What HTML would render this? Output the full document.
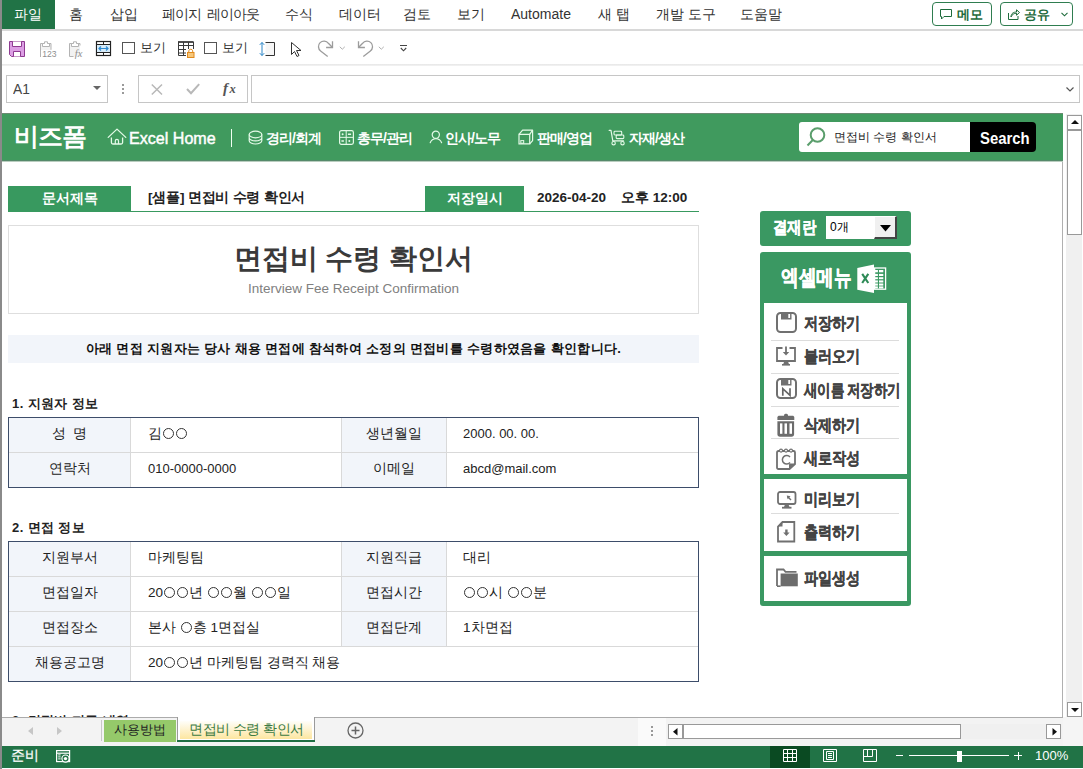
<!DOCTYPE html>
<html><head><meta charset="utf-8">
<style>
*{box-sizing:border-box;margin:0;padding:0}
html,body{width:1083px;height:769px;overflow:hidden;background:#fff;font-family:"Liberation Sans",sans-serif;color:#262626;position:relative}
.a{position:absolute;white-space:nowrap}
svg{position:absolute;overflow:visible}
#tabs{position:absolute;left:0;top:0;width:1083px;height:31px;background:#fff;border-bottom:2px solid #d8d8d8}
.tab{position:absolute;top:6px;font-size:14px;color:#333;white-space:nowrap;line-height:17px}
#filetab{position:absolute;left:1px;top:0;width:54px;height:29px;background:#217346;color:#fff;font-size:14px;line-height:29px;text-align:center}
.btn{position:absolute;top:2px;height:24px;border:1px solid #2f7d50;border-radius:4px}
.btxt{position:absolute;top:6px;font-size:13px;font-weight:bold;color:#1e6b3c;line-height:17px}
#leftedge{position:absolute;left:0;top:0;width:2px;height:769px;background:#8a8a8a;z-index:5}
#qat{position:absolute;left:0;top:31px;width:1083px;height:34px;background:#fff}
#qatline{position:absolute;left:0;top:64px;width:1083px;height:2px;background:linear-gradient(#e6e6e6,#f3f3f3)}
.box{position:absolute;border:1px solid #c6c6c6;background:#fff}
#banner{position:absolute;left:2px;top:113px;width:1061px;height:48px;background:#409a5e;border-top:1px solid #6a8a72;border-bottom:1px solid #55896a;box-shadow:0 1px 0 #b9cdbf}
.nav{position:absolute;top:12px;line-height:24px;color:#fff;font-size:14px;font-weight:bold;white-space:nowrap;letter-spacing:-1px}
.lbl{position:absolute;background:#38995f;color:#fff;font-weight:bold;font-size:13.5px;text-align:center;line-height:26px}
.line{position:absolute;background:#d9d9d9}
.dk{position:absolute;background:#3d4d6a}
.cell{position:absolute;font-size:13.5px;color:#222;white-space:nowrap;line-height:16px}
.lc{position:absolute;font-size:13.5px;color:#222;white-space:nowrap;line-height:16px;text-align:center}
.sec{position:absolute;font-size:13px;font-weight:bold;color:#222;white-space:nowrap;line-height:16px;letter-spacing:0.4px}
.mi{position:absolute;left:804px;font-size:17px;font-weight:bold;color:#444;-webkit-text-stroke:0.35px #444;white-space:nowrap;line-height:20px;transform:scaleX(0.83);transform-origin:0 0}
.o{display:inline-block;width:11px;height:11px;border:1px solid #333;border-radius:50%;margin:0 1px;vertical-align:-1px}
.msep{position:absolute;left:771px;width:128px;height:1px;background:#dcdcdc}
</style></head><body>
<div id="tabs">
  <div id="filetab">파일</div>
  <div class="tab" style="left:69px">홈</div>
  <div class="tab" style="left:110px">삽입</div>
  <div class="tab" style="left:162px;letter-spacing:-0.8px;word-spacing:2px">페이지 레이아웃</div>
  <div class="tab" style="left:285px">수식</div>
  <div class="tab" style="left:339px">데이터</div>
  <div class="tab" style="left:403px">검토</div>
  <div class="tab" style="left:457px">보기</div>
  <div class="tab" style="left:511px">Automate</div>
  <div class="tab" style="left:598px">새 탭</div>
  <div class="tab" style="left:656px">개발 도구</div>
  <div class="tab" style="left:740px">도움말</div>
  <div class="btn" style="left:932px;width:60px"></div>
  <svg style="left:940px;top:9px" width="12" height="11" viewBox="0 0 12 11"><path d="M0.5 0.5H11.5V7.5H4L1.5 10V7.5H0.5Z" fill="none" stroke="#1e6b3c" stroke-width="1"/></svg>
  <div class="btxt" style="left:957px">메모</div>
  <div class="btn" style="left:1000px;width:73px"></div>
  <svg style="left:1008px;top:9px" width="12" height="11" viewBox="0 0 12 11"><path d="M0.5 4V10.5H10V7" fill="none" stroke="#1e6b3c"/><path d="M3 8C3 4 6 3 8.5 3V0.8L11.5 3.5L8.5 6.2V4.2C6 4.2 4 5.5 3 8Z" fill="none" stroke="#1e6b3c"/></svg>
  <div class="btxt" style="left:1024px">공유</div>
  <svg style="left:1061px;top:12px" width="7" height="5" viewBox="0 0 7 5"><path d="M0.5 0.8L3.5 3.8L6.5 0.8" fill="none" stroke="#1e6b3c" stroke-width="1.1"/></svg>
</div>
<div id="qat">
  <!-- save -->
  <svg style="left:9px;top:10px" width="16" height="16" viewBox="0 0 16 16"><path d="M0.5 0.5H15.5V15.5H2.5L0.5 13.5Z" fill="#dc9ee4" stroke="#8e3b91"/><path d="M3.5 0.5V5.5H12.5V0.5" fill="#fff" stroke="#8e3b91"/><path d="M4.5 15.5V10.5H11.5V15.5" fill="#fff" stroke="#8e3b91"/></svg>
  <!-- paste values -->
  <svg style="left:40px;top:10px" width="15" height="17" viewBox="0 0 15 17"><rect x="1" y="2.6" width="10" height="6.5" fill="#f2f2f2"/><path d="M0.5 16V2.5H11V8.8" fill="none" stroke="#b3b3b3"/><path d="M2.5 5.5V2.5H4.5V0.8H7.5V2.5H9.5V5.5Z" fill="#fff" stroke="#b3b3b3"/><text x="2.2" y="15.9" font-size="8.6" fill="#8f8f8f" font-family="Liberation Sans">123</text></svg>
  <!-- paste formula -->
  <svg style="left:69px;top:10px" width="15" height="17" viewBox="0 0 15 17"><rect x="1" y="2.6" width="10" height="13" fill="#f2f2f2"/><path d="M0.5 15.5V2.5H11V4.5M0.5 15.5H4.5" fill="none" stroke="#b3b3b3"/><path d="M2.5 5.5V2.5H4.5V0.8H7.5V2.5H9.5V5.5Z" fill="#fff" stroke="#b3b3b3"/><text x="5.8" y="15.6" font-size="10.5" font-style="italic" fill="#8f8f8f" font-family="Liberation Serif">fx</text></svg>
  <!-- width -->
  <svg style="left:96px;top:10px" width="15" height="15" viewBox="0 0 15 15"><rect x="0.5" y="0.5" width="14" height="14" fill="#fff" stroke="#222" stroke-width="1.2"/><rect x="1" y="4" width="13" height="7" fill="#d6ebf9"/><path d="M0 3.5H15M0 11.5H15M7.5 0V3.5M7.5 11.5V15" stroke="#222" stroke-width="1"/><path d="M3 7.5H12M5 5.5L3 7.5L5 9.5M10 5.5L12 7.5L10 9.5" fill="none" stroke="#2f8ad0" stroke-width="1.2"/></svg>
  <div class="a" style="left:122px;top:11px;width:13px;height:12px;border:1px solid #555;background:#fff"></div>
  <div class="a" style="left:140px;top:9px;font-size:12.5px;color:#333;line-height:16px">보기</div>
  <!-- table lock -->
  <svg style="left:178px;top:10px" width="17" height="17" viewBox="0 0 17 17"><path d="M0.5 1V14.5H8M0 1H15.5V8M0.5 4.5H15.5M0.5 8.5H8M0.5 12H8M5.5 1V14.5M10.5 1V8" fill="none" stroke="#3a3a3a" stroke-width="1"/><path d="M0 1H15.5" stroke="#3a3a3a" stroke-width="1.6"/><rect x="9.5" y="11.5" width="6.5" height="5" fill="#f7c77a" stroke="#e08a1e"/><path d="M10.8 11.5V9.8A2 2 0 0 1 14.7 9.8V11.5" fill="none" stroke="#e08a1e"/></svg>
  <div class="a" style="left:204px;top:11px;width:13px;height:12px;border:1px solid #555;background:#fff"></div>
  <div class="a" style="left:222px;top:9px;font-size:12.5px;color:#333;line-height:16px">보기</div>
  <!-- row height -->
  <svg style="left:259px;top:10px" width="17" height="16" viewBox="0 0 17 16"><path d="M6.5 1.5H15.5V14.5H6.5" fill="#f6f6f6" stroke="#333"/><path d="M3 1.5V14.5M0.8 3.8L3 1.5L5.2 3.8M0.8 12.2L3 14.5L5.2 12.2" fill="none" stroke="#2a86c8" stroke-width="1"/></svg>
  <!-- cursor -->
  <svg style="left:291px;top:11px" width="11" height="15" viewBox="0 0 11 15"><path d="M0.5 0.5V12.5L3.5 9.5L6 14.5L8 13.5L5.5 8.5H10Z" fill="#fff" stroke="#333"/></svg>
  <!-- redo -->
  <svg style="left:318px;top:9px" width="17" height="18" viewBox="0 0 17 18"><path d="M14.5 7.5L10.4 3.3A5.5 5.5 0 1 0 2.6 10.9L9.7 16.5" fill="none" stroke="#9c9c9c" stroke-width="1.3"/><path d="M8.1 7.5H14.5V1.2" fill="none" stroke="#9c9c9c" stroke-width="1.3"/></svg>
  <svg style="left:339px;top:15px" width="7" height="4" viewBox="0 0 7 4"><path d="M0.8 0.8L3.3 3.2L5.8 0.8" fill="none" stroke="#b0b0b0" stroke-width="1"/></svg>
  <!-- undo -->
  <svg style="left:357px;top:9px" width="17" height="18" viewBox="0 0 17 18"><path d="M1.5 7.5L5.6 3.3A5.5 5.5 0 1 1 13.4 10.9L6.3 16.5" fill="none" stroke="#9c9c9c" stroke-width="1.3"/><path d="M7.9 7.5H1.5V1.2" fill="none" stroke="#9c9c9c" stroke-width="1.3"/></svg>
  <svg style="left:378px;top:15px" width="7" height="4" viewBox="0 0 7 4"><path d="M0.8 0.8L3.3 3.2L5.8 0.8" fill="none" stroke="#b0b0b0" stroke-width="1"/></svg>
  <!-- customize -->
  <svg style="left:400px;top:14px" width="7" height="7" viewBox="0 0 7 7"><path d="M0 0.5H7M0.8 3L3.5 5.8L6.2 3" fill="none" stroke="#444" stroke-width="1.1"/></svg>
</div>
<div id="qatline"></div>
<!-- formula bar -->
<div class="box" style="left:6px;top:75px;width:102px;height:28px"></div>
<div class="a" style="left:13px;top:80px;font-size:15px;color:#444;line-height:18px;transform:scaleX(0.92);transform-origin:0 0">A1</div>
<svg style="left:93px;top:86px" width="8" height="4" viewBox="0 0 8 4"><path d="M0 0H8L4 4Z" fill="#666"/></svg>
<div class="a" style="left:122px;top:84px;width:2px;height:2px;background:#9a9a9a"></div><div class="a" style="left:122px;top:88px;width:2px;height:2px;background:#9a9a9a"></div><div class="a" style="left:122px;top:92px;width:2px;height:2px;background:#9a9a9a"></div>
<div class="box" style="left:138px;top:75px;width:110px;height:28px"></div>
<svg style="left:151px;top:84px" width="12" height="11" viewBox="0 0 12 11"><path d="M0.8 0.5L11 10.5M11 0.5L0.8 10.5" stroke="#b8b8b8" stroke-width="1.5"/></svg>
<svg style="left:186px;top:83px" width="14" height="12" viewBox="0 0 14 12"><path d="M1 6L5 10.2L13.2 1.2" fill="none" stroke="#b8b8b8" stroke-width="2"/></svg>
<div class="a" style="left:223px;top:80px;font-size:15px;font-style:italic;font-weight:bold;color:#555;font-family:'Liberation Serif',serif;line-height:17px">f<span style="font-size:12.5px;margin-left:1.5px">x</span></div>
<div class="box" style="left:251px;top:75px;width:829px;height:28px"></div>
<svg style="left:1066px;top:87px" width="8" height="5" viewBox="0 0 8 5"><path d="M0.5 0.5L4 4L7.5 0.5" fill="none" stroke="#555" stroke-width="1.2"/></svg>
<div id="leftedge"></div>
<!-- sheet right edge -->
<div class="a" style="left:1062px;top:113px;width:1px;height:605px;background:#b0b0b0"></div>
<div class="a" style="left:1063px;top:113px;width:20px;height:604px;background:#fff"></div>
<!-- banner -->
<div id="banner">
  <div class="nav" style="left:12px;top:8px;font-size:25px;line-height:28px;letter-spacing:-1px">비즈폼</div>
  <svg style="left:105px;top:14px" width="20" height="17" viewBox="0 0 20 17"><path d="M1.2 9.4L10 1.1L18.8 9.4" fill="none" stroke="#e4fae8" stroke-width="1.3" stroke-linecap="round" stroke-linejoin="round"/><path d="M4.4 9.6V14.5Q4.4 16 5.9 16H14.1Q15.6 16 15.6 14.5V9.6" fill="none" stroke="#e4fae8" stroke-width="1.3"/><path d="M8.3 16V13A1.6 1.6 0 0 1 11.5 13V16" fill="none" stroke="#e4fae8" stroke-width="1.2"/></svg>
  <div class="nav" style="left:127px;top:12px;font-size:16.5px;font-weight:normal;letter-spacing:0;-webkit-text-stroke:0.45px #fff;transform:scaleX(0.975);transform-origin:0 0">Excel Home</div>
  <div class="a" style="left:229px;top:15px;width:1.3px;height:18px;background:#f0fff2"></div>
  <svg style="left:246px;top:16px" width="15" height="15" viewBox="0 0 15 15"><ellipse cx="7.5" cy="4.5" rx="6.3" ry="3.3" fill="none" stroke="#e4fae8" stroke-width="1.2"/><path d="M1.2 7.7A6.3 3.2 0 0 0 13.8 7.7M1.2 4.5V10.8A6.3 3.2 0 0 0 13.8 10.8V4.5" fill="none" stroke="#e4fae8" stroke-width="1.2"/></svg>
  <div class="nav" style="left:264px">경리/회계</div>
  <svg style="left:337px;top:16px" width="15" height="15" viewBox="0 0 15 15"><rect x="0.6" y="0.6" width="13.8" height="13.8" rx="1.8" fill="none" stroke="#e4fae8" stroke-width="1.2"/><path d="M7.2 0.6V14.4M0.6 7.35H14.4" stroke="#e4fae8" stroke-width="1"/><circle cx="3.6" cy="4.2" r="1" fill="#e4fae8"/><path d="M8.9 4.2H12.1M2.4 11H4.9" stroke="#e4fae8" stroke-width="1.5"/><circle cx="10.3" cy="11" r="1" fill="#e4fae8"/></svg>
  <div class="nav" style="left:355px">총무/관리</div>
  <svg style="left:427px;top:16px" width="14" height="14" viewBox="0 0 14 14"><circle cx="6.8" cy="4.8" r="3.6" fill="none" stroke="#e4fae8" stroke-width="1.2"/><path d="M1.2 12.7A6.1 6.1 0 0 1 12.6 12.7" fill="none" stroke="#e4fae8" stroke-width="1.2" stroke-linecap="round"/></svg>
  <div class="nav" style="left:443px">인사/노무</div>
  <svg style="left:516px;top:15px" width="16" height="16" viewBox="0 0 16 16"><path d="M1 5.4H11.7V14.85H1Z" fill="none" stroke="#e4fae8" stroke-width="1.2"/><path d="M1 5.4L4.6 1.2H14.6L11.7 5.4M14.6 1.2V11.6L11.7 14.85" fill="none" stroke="#e4fae8" stroke-width="1.2" stroke-linejoin="round"/><rect x="2.8" y="11.6" width="2.9" height="2.6" fill="none" stroke="#e4fae8" stroke-width="1"/></svg>
  <div class="nav" style="left:535px">판매/영업</div>
  <svg style="left:606px;top:15px" width="17" height="17" viewBox="0 0 17 17"><path d="M1.2 1.4H3L4.8 11.9H15.5" fill="none" stroke="#e4fae8" stroke-width="1.2" stroke-linejoin="round" stroke-linecap="round"/><circle cx="5.6" cy="14.2" r="1.7" fill="none" stroke="#e4fae8" stroke-width="1.1"/><circle cx="14.5" cy="14.2" r="1.7" fill="none" stroke="#e4fae8" stroke-width="1.1"/><rect x="6" y="2.3" width="7.7" height="3.7" rx="0.9" fill="none" stroke="#e4fae8" stroke-width="1.1"/><rect x="8.2" y="6" width="7.6" height="3.6" rx="0.9" fill="none" stroke="#e4fae8" stroke-width="1.1"/></svg>
  <div class="nav" style="left:627px">자재/생산</div>
  <div class="a" style="left:797px;top:8px;width:172px;height:30px;background:#fff;border-radius:3px 0 0 3px"></div>
  <svg style="left:804px;top:13px" width="20" height="20" viewBox="0 0 20 20"><circle cx="11.5" cy="8" r="6.8" fill="none" stroke="#5a9e6c" stroke-width="2"/><path d="M6.8 13L1.5 18.5" stroke="#5a9e6c" stroke-width="2"/></svg>
  <div class="a" style="left:832px;top:15px;font-size:12.2px;color:#222;line-height:16px">면접비 수령 확인서</div>
  <div class="a" style="left:968px;top:8px;width:66px;height:30px;background:#000;border-radius:0 4px 4px 0"></div>
  <div class="a" style="left:978px;top:16px;font-size:16px;font-weight:bold;color:#fff;line-height:18px;transform:scaleX(0.93);transform-origin:0 0">Search</div>
</div>
<!-- doc header -->
<div class="lbl" style="left:8px;top:186px;width:123px;height:26px">문서제목</div>
<div class="a" style="left:131px;top:211px;width:294px;height:1px;background:#38995f"></div>
<div class="cell" style="left:148px;top:190px;font-weight:bold;font-size:13.5px;letter-spacing:-0.2px">[샘플] 면접비 수령 확인서</div>
<div class="lbl" style="left:425px;top:186px;width:99px;height:26px">저장일시</div>
<div class="a" style="left:524px;top:211px;width:175px;height:1px;background:#38995f"></div>
<div class="cell" style="left:537px;top:190px;font-weight:bold;font-size:13.5px">2026-04-20 &nbsp;&nbsp;&nbsp;오후 12:00</div>
<div class="a" style="left:8px;top:225px;width:691px;height:89px;border:1px solid #dedede"></div>
<div class="a" style="left:8px;top:242px;width:691px;text-align:center;font-size:28px;font-weight:bold;color:#3a3a3a;line-height:34px">면접비 수령 확인서</div>
<div class="a" style="left:8px;top:281px;width:691px;text-align:center;font-size:13.5px;color:#808080;line-height:16px">Interview Fee Receipt Confirmation</div>
<div class="a" style="left:8px;top:335px;width:691px;height:28px;background:#f2f5fa;text-align:center;font-size:13px;font-weight:bold;line-height:28px;color:#111;letter-spacing:0.3px">아래 면접 지원자는 당사 채용 면접에 참석하여 소정의 면접비를 수령하였음을 확인합니다.</div>
<div class="sec" style="left:12px;top:396px">1. 지원자 정보</div>
<!-- table1 -->
<div class="a" style="left:9px;top:418px;width:121px;height:69px;background:#f2f5fa"></div>
<div class="a" style="left:342px;top:418px;width:104px;height:69px;background:#f2f5fa"></div>
<div class="line" style="left:9px;top:452px;width:689px;height:1px"></div>
<div class="line" style="left:130px;top:418px;width:1px;height:69px"></div>
<div class="line" style="left:341px;top:418px;width:1px;height:69px"></div>
<div class="line" style="left:446px;top:418px;width:1px;height:69px"></div>
<div class="a" style="left:8px;top:417px;width:691px;height:71px;border:1px solid #3d4d6a"></div>
<div class="lc" style="left:9px;width:121px;top:426px">성&nbsp;&nbsp;명</div>
<div class="cell" style="left:148px;top:426px">김<span class="o"></span><span class="o"></span></div>
<div class="lc" style="left:342px;width:104px;top:426px">생년월일</div>
<div class="cell" style="left:463px;top:426px;font-size:13px">2000. 00. 00.</div>
<div class="lc" style="left:9px;width:121px;top:461px">연락처</div>
<div class="cell" style="left:148px;top:461px;font-size:13px">010-0000-0000</div>
<div class="lc" style="left:342px;width:104px;top:461px">이메일</div>
<div class="cell" style="left:463px;top:461px;font-size:13px">abcd@mail.com</div>
<div class="sec" style="left:12px;top:520px">2. 면접 정보</div>
<!-- table2 -->
<div class="a" style="left:9px;top:542px;width:121px;height:139px;background:#f2f5fa"></div>
<div class="a" style="left:342px;top:542px;width:104px;height:104px;background:#f2f5fa"></div>
<div class="line" style="left:9px;top:576px;width:689px;height:1px"></div>
<div class="line" style="left:9px;top:611px;width:689px;height:1px"></div>
<div class="line" style="left:9px;top:646px;width:689px;height:1px"></div>
<div class="line" style="left:130px;top:542px;width:1px;height:139px"></div>
<div class="line" style="left:341px;top:542px;width:1px;height:104px"></div>
<div class="line" style="left:446px;top:542px;width:1px;height:104px"></div>
<div class="a" style="left:8px;top:541px;width:691px;height:141px;border:1px solid #3d4d6a"></div>
<div class="lc" style="left:9px;width:121px;top:550px">지원부서</div>
<div class="cell" style="left:148px;top:550px">마케팅팀</div>
<div class="lc" style="left:342px;width:104px;top:550px">지원직급</div>
<div class="cell" style="left:463px;top:550px">대리</div>
<div class="lc" style="left:9px;width:121px;top:585px">면접일자</div>
<div class="cell" style="left:148px;top:585px">20<span class="o"></span><span class="o"></span>년 <span class="o"></span><span class="o"></span>월 <span class="o"></span><span class="o"></span>일</div>
<div class="lc" style="left:342px;width:104px;top:585px">면접시간</div>
<div class="cell" style="left:463px;top:585px"><span class="o"></span><span class="o"></span>시 <span class="o"></span><span class="o"></span>분</div>
<div class="lc" style="left:9px;width:121px;top:620px">면접장소</div>
<div class="cell" style="left:148px;top:620px">본사 <span class="o"></span>층 1면접실</div>
<div class="lc" style="left:342px;width:104px;top:620px">면접단계</div>
<div class="cell" style="left:463px;top:620px">1차면접</div>
<div class="lc" style="left:9px;width:121px;top:655px">채용공고명</div>
<div class="cell" style="left:148px;top:655px">20<span class="o"></span><span class="o"></span>년 마케팅팀 경력직 채용</div>
<div class="sec" style="left:12px;top:713px">3. 면접비 지급 내역</div>
<!-- right panel -->
<div class="a" style="left:760px;top:211px;width:151px;height:35px;background:#3a9862;border-radius:3px"></div>
<div class="a" style="left:773px;top:217px;font-size:17px;font-weight:bold;color:#fff;-webkit-text-stroke:0.4px #fff;line-height:22px;transform:scaleX(0.85);transform-origin:0 0">결재란</div>
<div class="a" style="left:826px;top:216px;width:48px;height:23px;background:#fff"></div>
<div class="a" style="left:830px;top:220px;font-size:12px;color:#000;line-height:15px">0개</div>
<div class="a" style="left:874px;top:216px;width:23px;height:23px;background:#f0f0f0;border-right:2px solid #444;border-bottom:2px solid #444;border-top:1px solid #fff;border-left:1px solid #fff"></div>
<svg style="left:880px;top:225px" width="11" height="7" viewBox="0 0 11 7"><path d="M0 0H11L5.5 6.5Z" fill="#000"/></svg>
<div class="a" style="left:760px;top:252px;width:151px;height:354px;background:#3a9862;border-radius:3px"></div>
<div class="a" style="left:781px;top:265px;font-size:22px;font-weight:bold;color:#fff;-webkit-text-stroke:0.5px #fff;line-height:26px;transform:scaleX(0.8);transform-origin:0 0">엑셀메뉴</div>
<svg style="left:857px;top:264px" width="30" height="29" viewBox="0 0 30 29"><rect x="17.6" y="4" width="11" height="21.2" fill="none" stroke="#fff" stroke-width="1.3"/><rect x="17.3" y="6.0" width="3.6" height="2.3" fill="#fff"/><rect x="22.0" y="6.0" width="4.3" height="2.3" fill="#fff"/><rect x="17.3" y="9.9" width="3.6" height="2.1" fill="#fff"/><rect x="22.0" y="9.9" width="4.3" height="2.1" fill="#fff"/><rect x="17.3" y="13.2" width="3.6" height="2.0" fill="#fff"/><rect x="22.0" y="13.2" width="4.3" height="2.0" fill="#fff"/><rect x="17.3" y="16.4" width="3.6" height="2.1" fill="#fff"/><rect x="22.0" y="16.4" width="4.3" height="2.1" fill="#fff"/><rect x="17.3" y="19.5" width="3.6" height="2.1" fill="#fff"/><rect x="22.0" y="19.5" width="4.3" height="2.1" fill="#fff"/><rect x="17.3" y="22.4" width="3.6" height="2.0" fill="#fff"/><rect x="22.0" y="22.4" width="4.3" height="2.0" fill="#fff"/><path d="M0.3 3.9L17 0.5V28.9L0.3 25.7Z" fill="#fff"/><path d="M5.2 9.8L11.3 19M11.3 9.8L5.2 19" stroke="#2e8b57" stroke-width="2.1"/></svg>
<div class="a" style="left:764px;top:303px;width:143px;height:171px;background:#fff"></div>
<div class="a" style="left:764px;top:479px;width:143px;height:72px;background:#fff"></div>
<div class="a" style="left:764px;top:556px;width:143px;height:45px;background:#fff"></div>
<div class="msep" style="top:340px"></div>
<div class="msep" style="top:373px"></div>
<div class="msep" style="top:406px"></div>
<div class="msep" style="top:438px"></div>
<div class="msep" style="top:513px"></div>
<div class="mi" style="top:314px">저장하기</div>
<div class="mi" style="top:347px">불러오기</div>
<div class="mi" style="top:381px;word-spacing:-1.5px;transform:scaleX(0.79)">새이름 저장하기</div>
<div class="mi" style="top:416px">삭제하기</div>
<div class="mi" style="top:449px">새로작성</div>
<div class="mi" style="top:490px">미리보기</div>
<div class="mi" style="top:523px">출력하기</div>
<div class="mi" style="top:569px">파일생성</div>
<!-- menu icons -->
<svg style="left:776px;top:312px" width="21" height="21" viewBox="0 0 21 21"><rect x="1" y="1" width="19" height="19" rx="3.5" fill="none" stroke="#707070" stroke-width="2"/><rect x="5" y="1" width="10.5" height="6.5" fill="#707070"/><rect x="12.3" y="2" width="1.8" height="4" fill="#fff"/></svg>
<svg style="left:776px;top:346px" width="20" height="20" viewBox="0 0 20 20"><path d="M6.5 2H1V15H19V2H13.5" fill="none" stroke="#707070" stroke-width="1.8"/><path d="M10 0.5V8" stroke="#707070" stroke-width="1.8"/><path d="M6.8 6L10 9.6L13.2 6Z" fill="#707070"/><path d="M8.2 15.5L7.2 18.2H13L12 15.5Z" fill="#707070"/><rect x="6" y="18" width="8" height="1.6" fill="#707070"/></svg>
<svg style="left:776px;top:378px" width="21" height="21" viewBox="0 0 21 21"><rect x="1" y="1" width="19" height="19" rx="3.5" fill="none" stroke="#707070" stroke-width="2"/><rect x="5" y="1" width="10.5" height="6.5" fill="#707070"/><rect x="12.3" y="2" width="1.8" height="4" fill="#fff"/><path d="M6.8 17.8V10.6L14 17.4V10.2" fill="none" stroke="#666" stroke-width="1.7" stroke-linejoin="miter"/></svg>
<svg style="left:777px;top:413px" width="18" height="24" viewBox="0 0 18 24"><path d="M0.4 7V4.5C0.4 3.3 1.3 2.8 2.5 2.8H15.3C16.5 2.8 17.3 3.3 17.3 4.5V7Z" fill="#6c6c6c"/><rect x="7" y="0.8" width="4" height="3" rx="1.5" fill="#6c6c6c"/><path d="M0.4 8.3H17.1V21C17.1 22.8 16.2 23.8 14.5 23.8H3C1.3 23.8 0.4 22.8 0.4 21Z" fill="#6c6c6c"/><rect x="3" y="10.4" width="2.4" height="10.4" fill="#fff"/><rect x="7.5" y="10.4" width="2.5" height="10.4" fill="#fff"/><rect x="12.5" y="10.4" width="2.5" height="10.4" fill="#fff"/></svg>
<svg style="left:776px;top:448px" width="20" height="22" viewBox="0 0 20 22"><path d="M1 4.5C1 3.5 1.5 3 2.5 3H17.5C18.5 3 19 3.5 19 4.5V16L13.5 21H2.5C1.5 21 1 20.5 1 19.5Z" fill="none" stroke="#707070" stroke-width="1.8"/><path d="M13 21.3V17C13 16 13.5 15.5 14.5 15.5H19.2Z" fill="#707070"/><circle cx="5" cy="2.6" r="1.5" fill="#fff" stroke="#707070" stroke-width="1.1"/><circle cx="10" cy="2.6" r="1.5" fill="#fff" stroke="#707070" stroke-width="1.1"/><circle cx="15" cy="2.6" r="1.5" fill="#fff" stroke="#707070" stroke-width="1.1"/><path d="M14 9A4.3 4.3 0 1 0 14 14.5" fill="none" stroke="#707070" stroke-width="1.5"/></svg>
<svg style="left:777px;top:491px" width="20" height="18" viewBox="0 0 20 18"><rect x="1" y="1" width="17.5" height="12" rx="2" fill="none" stroke="#707070" stroke-width="1.8"/><path d="M10.5 5.5L14 9" stroke="#707070" stroke-width="1.4"/><path d="M9.8 4.5L13.5 5.2L10.6 8.2Z" fill="#707070"/><path d="M8 13.5L7 16H12.5L11.5 13.5Z" fill="#707070"/><rect x="5" y="15.8" width="9.5" height="1.8" fill="#707070"/></svg>
<svg style="left:777px;top:521px" width="19" height="22" viewBox="0 0 19 22"><path d="M5.5 1H17.3V20.5H1V5.5Z" fill="none" stroke="#707070" stroke-width="1.8"/><path d="M1 5.5H5.5V1Z" fill="#707070"/><rect x="8.2" y="8.5" width="2.4" height="3.5" fill="#707070"/><path d="M6.2 11.5H12.6L9.4 15Z" fill="#707070"/></svg>
<svg style="left:776px;top:568px" width="22" height="19" viewBox="0 0 22 19"><path d="M1 18V1.5H7.5L9.5 3.8H20.5" fill="none" stroke="#707070" stroke-width="1.8"/><path d="M4.6 5.5H21.8V18.3H4.6Z" fill="#6c6c6c"/><path d="M1 18.2H4.6" stroke="#707070" stroke-width="1.6"/></svg>
<!-- vscroll -->
<div class="a" style="left:1066px;top:114px;width:16px;height:603px;background:#f0f0f0"></div>
<div class="a" style="left:1067px;top:115px;width:15px;height:15px;background:#fff;border:1px solid #999"></div>
<svg style="left:1071px;top:120px" width="8" height="4" viewBox="0 0 8 4"><path d="M0 4L4 0L8 4Z" fill="#111"/></svg>
<div class="a" style="left:1067px;top:130px;width:15px;height:105px;background:#fff;border:1px solid #999"></div>
<div class="a" style="left:1067px;top:702px;width:15px;height:15px;background:#fff;border:1px solid #999"></div>
<svg style="left:1071px;top:708px" width="8" height="4" viewBox="0 0 8 4"><path d="M0 0L4 4L8 0Z" fill="#111"/></svg>
<!-- tab bar -->
<div class="a" style="left:0;top:717px;width:1063px;height:29px;background:#f3f3f3;border-top:1px solid #ababab"></div><div class="a" style="left:1063px;top:717px;width:20px;height:29px;background:#f5f5f5"></div>
<svg style="left:28px;top:727px" width="5" height="8" viewBox="0 0 5 8"><path d="M5 0V8L0 4Z" fill="#c6c6c6"/></svg>
<svg style="left:57px;top:727px" width="5" height="8" viewBox="0 0 5 8"><path d="M0 0V8L5 4Z" fill="#c6c6c6"/></svg>
<div class="a" style="left:101px;top:720px;width:1px;height:21px;background:#c8c8c8"></div>
<div class="a" style="left:104px;top:720px;width:72px;height:22px;background:#95c96a"></div>
<div class="a" style="left:114px;top:721px;font-size:13px;color:#222;line-height:17px">사용방법</div>
<div class="a" style="left:177px;top:717px;width:138px;height:25px;background:#fff;border-left:1px solid #9a9a9a;border-right:1px solid #9a9a9a"></div>
<div class="a" style="left:180px;top:721px;width:132px;height:18px;background:linear-gradient(#fffefa,#fde6a0)"></div>
<div class="a" style="left:177px;top:740px;width:138px;height:2px;background:#1f6e43"></div>
<div class="a" style="left:189px;top:721px;font-size:13.5px;color:#3c7a42;line-height:17px;letter-spacing:-0.5px">면접비 수령 확인서</div>
<svg style="left:347px;top:722px" width="17" height="17" viewBox="0 0 17 17"><circle cx="8.5" cy="8.5" r="7.5" fill="none" stroke="#666" stroke-width="1.3"/><path d="M8.5 4.5V12.5M4.5 8.5H12.5" stroke="#666" stroke-width="1.5"/></svg>
<div class="a" style="left:638px;top:718px;width:28px;height:28px;background:#fafafa"></div><div class="a" style="left:651px;top:726px;width:2px;height:2px;background:#999"></div><div class="a" style="left:651px;top:730px;width:2px;height:2px;background:#999"></div><div class="a" style="left:651px;top:734px;width:2px;height:2px;background:#999"></div>
<div class="a" style="left:667px;top:724px;width:395px;height:15px;background:#f0f0f0"></div>
<div class="a" style="left:668px;top:724px;width:15px;height:15px;background:#fff;border:1px solid #999"></div>
<svg style="left:673px;top:728px" width="5" height="8" viewBox="0 0 5 8"><path d="M4.5 0V7.5L0 3.75Z" fill="#111"/></svg>
<div class="a" style="left:683px;top:724px;width:278px;height:15px;background:#fff;border:1px solid #999"></div>
<div class="a" style="left:1046px;top:724px;width:15px;height:15px;background:#fff;border:1px solid #999"></div>
<svg style="left:1052px;top:728px" width="5" height="8" viewBox="0 0 5 8"><path d="M0.5 0V7.5L5 3.75Z" fill="#111"/></svg>
<!-- status bar -->
<div class="a" style="left:0;top:746px;width:1083px;height:22px;background:#217346"></div>
<div class="a" style="left:11px;top:748px;font-size:13.5px;color:#fff;-webkit-text-stroke:0.25px #fff;line-height:16px">준비</div>
<svg style="left:56px;top:750px" width="15" height="14" viewBox="0 0 15 14"><rect x="0.6" y="0.6" width="13" height="11" fill="none" stroke="#fff" stroke-width="1.2"/><path d="M0.6 3.2H13.6" stroke="#fff" stroke-width="1.2"/><path d="M2.2 4.9H4.6M2.2 6.9H4.6M2.2 8.9H4.6" stroke="#fff" stroke-width="1"/><circle cx="9.5" cy="8.6" r="3.6" fill="#217346" stroke="#fff" stroke-width="1.2"/><circle cx="9.5" cy="8.6" r="1.7" fill="#fff"/></svg>
<div class="a" style="left:770px;top:746px;width:40px;height:22px;background:#0a4a22"></div>
<svg style="left:783px;top:749px" width="14" height="13" viewBox="0 0 14 13"><path d="M0.5 0.5H13.5V12.5H0.5ZM0.5 4.5H13.5M0.5 8.5H13.5M4.5 0.5V12.5M9.5 0.5V12.5" fill="none" stroke="#fff" stroke-width="1"/></svg>
<svg style="left:823px;top:749px" width="14" height="13" viewBox="0 0 14 13"><path d="M0.5 0.5H13.5V12.5H0.5ZM3.5 2.5H10.5V10.5H3.5Z" fill="none" stroke="#fff" stroke-width="1"/><path d="M5 4.5H9M5 6.5H9M5 8.5H9" stroke="#fff" stroke-width="1"/></svg>
<svg style="left:863px;top:749px" width="14" height="13" viewBox="0 0 14 13"><path d="M0.5 0.5H13.5V12.5H0.5ZM0.5 7.5H9.5V0.5M4.5 0.5V7.5" fill="none" stroke="#fff" stroke-width="1"/></svg>
<div class="a" style="left:896px;top:755px;width:7px;height:1px;background:#fff"></div>
<div class="a" style="left:909px;top:755px;width:100px;height:1px;background:#fff"></div>
<div class="a" style="left:957px;top:751px;width:5px;height:11px;background:#fff"></div>
<div class="a" style="left:1014px;top:755px;width:8px;height:1px;background:#fff"></div>
<div class="a" style="left:1017.5px;top:751.5px;width:1px;height:8px;background:#fff"></div>
<div class="a" style="left:1035px;top:748px;font-size:13px;color:#fff;line-height:16px">100%</div>
</body></html>
